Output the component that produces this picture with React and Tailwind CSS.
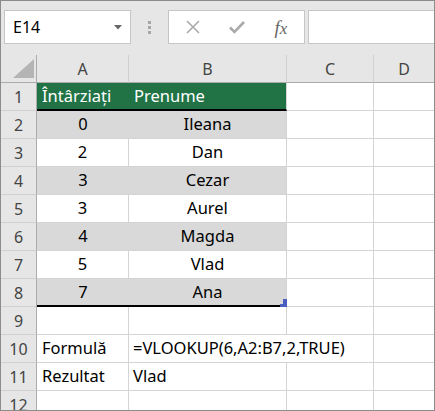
import React from 'react';

const cols = ['A', 'B', 'C', 'D'];

const rows = [
  { n: 1, a: 'Întârziați', b: 'Prenume', kind: 'head' },
  { n: 2, a: '0', b: 'Ileana', kind: 'gray' },
  { n: 3, a: '2', b: 'Dan', kind: 'white' },
  { n: 4, a: '3', b: 'Cezar', kind: 'gray' },
  { n: 5, a: '3', b: 'Aurel', kind: 'white' },
  { n: 6, a: '4', b: 'Magda', kind: 'gray' },
  { n: 7, a: '5', b: 'Vlad', kind: 'white' },
  { n: 8, a: '7', b: 'Ana', kind: 'last' },
  { n: 9, a: '', b: '', kind: 'plain' },
  { n: 10, a: 'Formulă', b: '=VLOOKUP(6,A2:B7,2,TRUE)', kind: 'formula' },
  { n: 11, a: 'Rezultat', b: 'Vlad', kind: 'plain' },
  { n: 12, a: '', b: '', kind: 'plain' },
];

const aClass = {
  head: 'bg-[#217346] text-white border-b-2 border-b-black pl-[5px]',
  gray: 'bg-[#d9d9d9] border-b border-b-[#d4d4d4] justify-center',
  white: 'bg-white border-r border-r-[#d4d4d4] border-b border-b-[#d4d4d4] justify-center',
  last: 'bg-[#d9d9d9] border-b-2 border-b-black justify-center',
  plain: 'bg-white border-r border-r-[#d4d4d4] border-b border-b-[#d4d4d4] pl-[5px]',
  formula: 'bg-white border-r border-r-[#d4d4d4] border-b border-b-[#d4d4d4] pl-[5px]',
};

const bClass = {
  head: 'bg-[#217346] text-white border-b-2 border-b-black border-r border-r-[#d4d4d4] pl-[5px]',
  gray: 'bg-[#d9d9d9] border-b border-b-[#d4d4d4] border-r border-r-[#d4d4d4] justify-center',
  white: 'bg-white border-r border-r-[#d4d4d4] border-b border-b-[#d4d4d4] justify-center',
  last: 'bg-[#d9d9d9] border-b-2 border-b-black border-r border-r-[#d4d4d4] justify-center relative',
  plain: 'bg-white border-r border-r-[#d4d4d4] border-b border-b-[#d4d4d4] pl-[4px]',
  formula: 'bg-white border-b border-b-[#d4d4d4] pl-[4px] overflow-visible z-10',
};

function Toolbar() {
  return (
    <div className="h-[54px] bg-[#e6e6e6] flex items-start pt-[9px] pl-[3px] gap-0">
      <div className="w-[127px] h-[34px] bg-white border border-[#c6c6c6] flex items-center justify-between pl-[8px] pr-[8px] shrink-0">
        <span className="text-[16px] text-black">E14</span>
        <svg width="8" height="5" viewBox="0 0 8 5"><path d="M0 0H8L4 4.5Z" fill="#666" /></svg>
      </div>
      <div className="w-[37px] h-[34px] flex flex-col items-center justify-center gap-[2px] shrink-0">
        <div className="w-[3px] h-[3px] bg-[#a6a6a6]" />
        <div className="w-[3px] h-[3px] bg-[#a6a6a6]" />
        <div className="w-[3px] h-[3px] bg-[#a6a6a6]" />
      </div>
      <div className="w-[137px] h-[34px] bg-white border border-[#c6c6c6] flex items-center shrink-0">
        <div className="w-[46px] flex justify-center pl-[2px]">
          <svg width="16" height="16" viewBox="0 0 16 16"><path d="M2 2L14 14M14 2L2 14" stroke="#aaa" strokeWidth="1.6" /></svg>
        </div>
        <div className="w-[44px] flex justify-center">
          <svg width="18" height="16" viewBox="0 0 18 16"><path d="M2 8.5L6.5 13L16 3" stroke="#aaa" strokeWidth="2.6" fill="none" /></svg>
        </div>
        <div className="w-[44px] flex justify-center">
          <span className="text-[19px] italic text-[#666] font-['Liberation_Serif',serif] leading-none">
            f<span className="text-[17px]">x</span>
          </span>
        </div>
      </div>
      <div className="ml-[3px] flex-1 h-[34px] bg-white border border-[#c6c6c6] border-r-0" />
    </div>
  );
}

export default function App() {
  return (
    <div className="w-[435px] h-[411px] overflow-hidden bg-white border border-[#8c8c8c] font-['Noto_Sans','Open_Sans',sans-serif] text-[16px] text-black">
      <Toolbar />
      <div className="grid grid-cols-[36px_92px_158px_87px_61px] auto-rows-[28px]">
        <div className="bg-[#e6e6e6] border-r border-r-[#ababab] border-b border-b-[#ababab] relative">
          <svg className="absolute right-[2px] bottom-[4px]" width="21" height="19" viewBox="0 0 21 19"><path d="M21 0V19H0Z" fill="#b4b4b4" /></svg>
        </div>
        {cols.map((c) => (
          <div key={c} className="bg-[#e6e6e6] border-r border-r-[#d0d0d0] border-b border-b-[#ababab] flex items-center justify-center text-[#444]">
            {c}
          </div>
        ))}

        {rows.map((r) => (
          <React.Fragment key={r.n}>
            <div className="bg-[#e6e6e6] border-r border-r-[#ababab] border-b border-b-[#d0d0d0] flex items-center justify-center text-[#444]">
              {r.n}
            </div>
            <div className={`flex items-center whitespace-nowrap text-[16.5px] ${aClass[r.kind]}`}>{r.a}</div>
            <div className={`flex items-center whitespace-nowrap text-[16.5px] ${bClass[r.kind]}`}>
              {r.b}
              {r.kind === 'last' && (
                <>
                  <div className="absolute right-[-1px] bottom-[-2px] w-[7px] h-[3px] bg-[#4a5fc1]" />
                  <div className="absolute right-[-1px] bottom-0 w-[4px] h-[6px] bg-[#4a5fc1]" />
                </>
              )}
            </div>
            <div className={r.kind === 'formula' ? 'border-r border-r-[#d4d4d4] border-b border-b-[#d4d4d4]' : 'bg-white border-r border-r-[#d4d4d4] border-b border-b-[#d4d4d4]'} />
            <div className="bg-white border-b border-b-[#d4d4d4]" />
          </React.Fragment>
        ))}
      </div>
    </div>
  );
}
